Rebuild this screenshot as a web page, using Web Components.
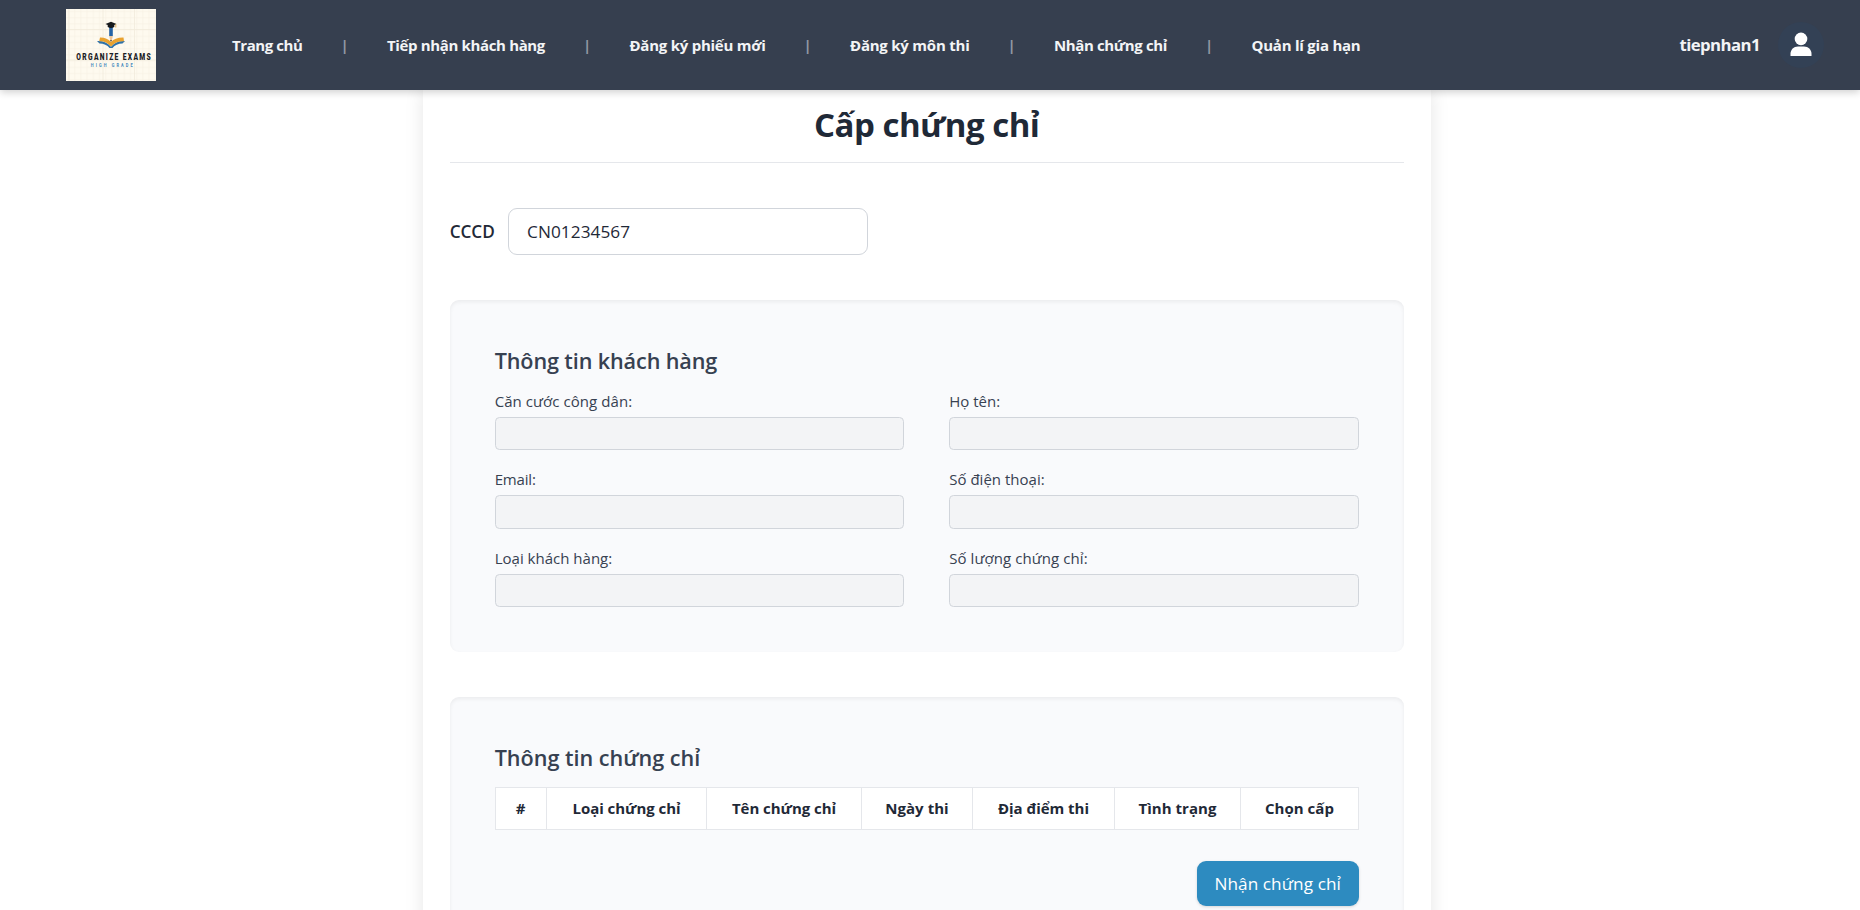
<!DOCTYPE html>
<html lang="vi">
<head>
<meta charset="utf-8">
<title>Cấp chứng chỉ</title>
<style>
html,body{margin:0;height:100%;overflow:hidden;background:#fff}
body{font-family:"Open Sans","Noto Sans",sans-serif;font-size:17.2px;color:#1f2937}
</style>
</head>
<body>
<exam-app></exam-app>
<script>
const define = (name, html, setup) => customElements.define(name, class extends HTMLElement {
  connectedCallback() {
    if (this.shadowRoot) return;
    const t = document.createElement('template');
    t.innerHTML = html;
    this.attachShadow({mode: 'open'}).append(t.content.cloneNode(true));
    if (setup) setup(this, this.shadowRoot);
  }
});

// Text tracked so that its line is exactly `w` pixels long.
define('fit-text', `<style>
:host{display:inline-block;white-space:nowrap}
span{display:inline-block;white-space:nowrap}
</style><span><slot></slot></span>`, (el, root) => {
  const span = root.querySelector('span');
  const w = parseFloat(el.getAttribute('w'));
  const n = [...el.textContent.trim()].length;
  const natural = span.getBoundingClientRect().width;
  if (natural) span.style.letterSpacing = ((w - natural) / n).toFixed(3) + 'px';
  el.style.width = w + 'px';
});

define('brand-logo', `<style>
:host{display:block;width:90px;height:72px;flex:none}
svg{display:block}
</style>
<svg width="90" height="72" viewBox="0 0 90 72">
<defs><pattern id="g" width="6.2" height="6.2" patternUnits="userSpaceOnUse"><path d="M2.5 0V6.2M0 2.5H6.2" stroke="#f6f0e3" stroke-width=".6" fill="none"/></pattern></defs>
<rect width="90" height="72" fill="#fefaef"/><rect width="90" height="72" fill="url(#g)"/>
<path d="M3 0V72M37 0V72M68.500 0V72M0 20.500H90M0 51H90" stroke="#f1ebdc" stroke-width=".8"/>
<path d="M31 32Q40 31.500 45 37.800Q50 31.500 59 32L56.500 34.500Q50 34.500 46.500 39H43.500Q40 34.500 33.500 34.500Z" fill="#2f72a8"/>
<path d="M34 28.500Q41 28.300 45 33Q49 28.300 57.500 28.500L58 32.200Q50 31.800 45 37.600Q40 31.800 33.200 32.200Z" fill="#e9a22f"/>
<path d="M43.200 18H46.800V27H43.200Z" fill="#2563a5"/>
<path d="M43.200 27H46.800L45.800 31.500H44.200Z" fill="#edc59a"/>
<path d="M44.200 31H45.800L45 33Z" fill="#20252b"/>
<path d="M39.500 15L45 12.800L50.500 15L48.300 16V18Q45 19.800 41.700 18V16Z" fill="#16191c"/>
<path d="M49.800 15.300V18.500" stroke="#d99b35" stroke-width=".8"/>
<text transform="translate(10.300 51.200) scale(.68 1)" textLength="109.500" lengthAdjust="spacing" font-family="Roboto,sans-serif" font-weight="900" font-size="9.900" fill="#1b2024">ORGANIZE EXAMS</text>
<text transform="translate(24.800 58) scale(.68 1)" textLength="61.500" lengthAdjust="spacing" font-family="Roboto,sans-serif" font-weight="700" font-size="5.800" fill="#4589bd">HIGH GRADE</text>
</svg>`);

define('nav-links', `<style>
:host{display:flex;align-items:center;font-size:15px;font-weight:700;line-height:20px;color:#f3f4f6}
.s{width:84.5px;text-align:center;color:#9298a3;font-weight:700;font-size:15px}
</style>
<fit-text w="70.5">Trang chủ</fit-text><span class="s">|</span>
<fit-text w="158">Tiếp nhận khách hàng</fit-text><span class="s">|</span>
<fit-text w="136">Đăng ký phiếu mới</fit-text><span class="s">|</span>
<fit-text w="119.5">Đăng ký môn thi</fit-text><span class="s">|</span>
<fit-text w="113">Nhận chứng chỉ</fit-text><span class="s">|</span>
<fit-text w="109">Quản lí gia hạn</fit-text>`);

define('user-badge', `<style>
:host{display:flex;align-items:center;gap:18px;color:#f3f4f6;font-weight:700;font-size:16.800px;line-height:24px}
i{display:block;width:46px;height:46px;border-radius:50%;background:#334155}
svg{display:block}
</style>
<fit-text w="80.5">tiepnhan1</fit-text>
<i><svg width="46" height="46" viewBox="0 0 46 46" fill="#fff"><circle cx="23" cy="16.900" r="6.300"/><path d="M12.500 34V31.700C12.500 27.500 15.700 24.400 20 24.400H26C30.300 24.400 33.500 27.500 33.500 31.700V34Z"/></svg></i>`);

define('app-header', `<style>
:host{display:flex;flex:none;align-items:center;box-sizing:border-box;height:90px;padding:0 36px 0 66px;background:#363f4f;box-shadow:0 2px 8px rgba(0,0,0,.2);position:relative;z-index:1}
nav-links{margin-left:76px}
user-badge{margin-left:auto}
</style>
<brand-logo></brand-logo><nav-links></nav-links><user-badge></user-badge>`);

define('page-title', `<style>
:host{display:block;text-align:center;padding:14px 0 17px;border-bottom:1px solid #e5e7eb;line-height:41px}
h1{margin:0;font-size:33px;font-weight:700;line-height:41px;color:#1f2937}
</style><h1><slot></slot></h1>`);

define('id-lookup', `<style>
:host{display:flex;align-items:center;gap:13px;margin:45px 0}
.l{font-weight:600;line-height:27px}
.b{box-sizing:border-box;width:360px;height:47px;border:1px solid #d1d5db;border-radius:9px;padding:0 18.4px;line-height:45px;background:#fff}
</style>
<span class="l"><fit-text w="45">CCCD</fit-text></span>
<div class="b"><fit-text w="103">CN01234567</fit-text></div>`);

define('info-section', `<style>
:host{display:block;padding:45px;border-radius:9px;background:#f9fafc;box-shadow:inset 0 2px 4px rgba(0,0,0,.06);margin-bottom:45px}
h2{margin:0 0 13.5px;font-size:21.600px;font-weight:600;line-height:31.5px;height:31.5px;color:#374151}
</style><h2><slot name="heading"></slot></h2><slot></slot>`);

define('field-grid', `<style>
:host{display:grid;grid-template-columns:1fr 1fr;gap:18px 45px}
</style><slot></slot>`);

define('read-field', `<style>
:host{display:block;font-size:15px;color:#374151}
.l{height:22.5px;line-height:22.5px;margin-bottom:4.5px}
.b{box-sizing:border-box;height:33.25px;border:1px solid #d1d5db;border-radius:4.5px;background:#f3f4f6}
</style><div class="l"><slot></slot></div><div class="b"></div>`);

define('cert-table', `<style>
:host{display:block}
.r{display:grid;box-sizing:border-box;grid-template-columns:51px 160px 155px 111px 142px 126px 1fr;height:43px;border:1px solid #e5e7eb;border-left:0;background:#fff;font-size:15px;font-weight:700;line-height:41px;text-align:center}
.r>div{border-left:1px solid #e5e7eb}
fit-text{margin-left:.6px}
</style>
<div class="r"><div>#</div><div><fit-text w="108">Loại chứng chỉ</fit-text></div><div><fit-text w="104">Tên chứng chỉ</fit-text></div><div><fit-text w="63.500">Ngày thi</fit-text></div><div><fit-text w="91">Địa điểm thi</fit-text></div><div><fit-text w="78">Tình trạng</fit-text></div><div><fit-text w="69">Chọn cấp</fit-text></div></div>`);

define('action-button', `<style>
:host{display:flex;justify-content:flex-end;margin-top:31.5px}
button{all:unset;box-sizing:border-box;width:162px;height:45px;border-radius:9px;background:#2d8bc0;color:#fff;text-align:center;line-height:45px;box-shadow:0 1px 3px rgba(0,0,0,.15)}
</style><button><slot></slot></button>`);

define('exam-app', `<style>
:host{display:flex;flex-direction:column;height:910px;overflow:hidden}
main{box-sizing:border-box;width:1008px;margin-left:422.7px;padding:0 27px;background:#fff;box-shadow:0 0 18px rgba(0,0,0,.1);flex:none}
</style>
<app-header></app-header>
<main>
<page-title><fit-text w="225.5">Cấp chứng chỉ</fit-text></page-title>
<id-lookup></id-lookup>
<info-section><fit-text slot="heading" w="222.500">Thông tin khách hàng</fit-text>
<field-grid>
<read-field><fit-text w="137.500">Căn cước công dân:</fit-text></read-field>
<read-field><fit-text w="51">Họ tên:</fit-text></read-field>
<read-field><fit-text w="41">Email:</fit-text></read-field>
<read-field><fit-text w="95.5">Số điện thoại:</fit-text></read-field>
<read-field><fit-text w="117.500">Loại khách hàng:</fit-text></read-field>
<read-field><fit-text w="138.5">Số lượng chứng chỉ:</fit-text></read-field>
</field-grid></info-section>
<info-section><fit-text slot="heading" w="205.500">Thông tin chứng chỉ</fit-text>
<cert-table></cert-table>
<action-button><fit-text w="126.500">Nhận chứng chỉ</fit-text></action-button>
</info-section>
</main>`);
</script>
</body>
</html>
